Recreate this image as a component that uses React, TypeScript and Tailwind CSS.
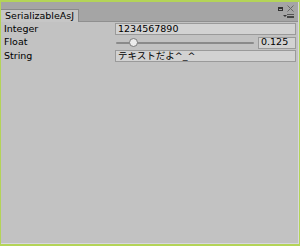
import React from 'react';

const font = { fontFamily: '"DejaVu Sans", "Noto Sans CJK JP", sans-serif' };

export default function App() {
    const [value, setValue] = React.useState(0.125);

    return (
        <div className="w-[300px] h-[246px] bg-[#b4d458] pt-[2px] pl-[1px] pb-[2px] pr-[1px] text-[9.5px] text-black" style={font}>
            <div className="flex flex-col h-full bg-[#c2c2c2] border-r border-b border-[#d8d8e0]">
                <div className="flex items-end justify-between h-[20px] bg-[#a5a5a5] border-b border-[#8f8f8f]">
                    <div className="flex items-center h-[13px] px-[4px] bg-[#c6c6c6] border-t border-r border-[#8a8a8a] mb-[-1px] leading-none">
                        SerializableAsJ
                    </div>
                    <div className="flex flex-col items-end pr-[4px] pb-[3px] gap-[2px]">
                        <div className="flex items-center gap-[4px]">
                            <div className="w-[5px] h-[4px] border border-[#333] border-t-2" />
                            <svg width="7" height="7" viewBox="0 0 7 7">
                                <path d="M0.5 0.5 L6.5 6.5 M6.5 0.5 L0.5 6.5" stroke="#666" strokeWidth="1" />
                            </svg>
                        </div>
                        <svg width="11" height="4" viewBox="0 0 11 4">
                            <path d="M0 1 L4 1 L2 3 Z" fill="#333" />
                            <rect x="4" y="0" width="7" height="1" fill="#555" />
                            <rect x="4" y="2" width="7" height="2" fill="#444" />
                        </svg>
                    </div>
                </div>
                <div className="flex flex-col gap-[1.5px] pt-[1px] pl-[3px] pr-[2px]">
                    <div className="flex items-center h-[12px]">
                        <div className="w-[111px]">Integer</div>
                        <div className="flex-1 h-[12px] flex items-center px-[2px] bg-[#d2d2d2] border border-[#9a9a9a]">1234567890</div>
                    </div>
                    <div className="flex items-center h-[12px]">
                        <div className="w-[111px]">Float</div>
                        <div className="relative flex-1 h-[12px] mr-[4px]">
                            <div className="absolute left-[1px] right-0 top-[5px] h-[2px] bg-[#8a8a8a] rounded-full" />
                            <div className="absolute top-[1.5px] w-[9px] h-[9px] rounded-full bg-[#ececec] border border-[#7a7a7a]" style={{ left: `${value * 80 + 4}px` }} />
                        </div>
                        <div className="w-[38px] h-[12px] flex items-center px-[2px] bg-[#d2d2d2] border border-[#9a9a9a]" onClick={() => setValue(value)}>0.125</div>
                    </div>
                    <div className="flex items-center h-[12px]">
                        <div className="w-[111px]">String</div>
                        <div className="flex-1 h-[12px] flex items-center px-[2px] bg-[#d2d2d2] border border-[#9a9a9a]">テキストだよ^_^</div>
                    </div>
                </div>
            </div>
        </div>
    );
}
